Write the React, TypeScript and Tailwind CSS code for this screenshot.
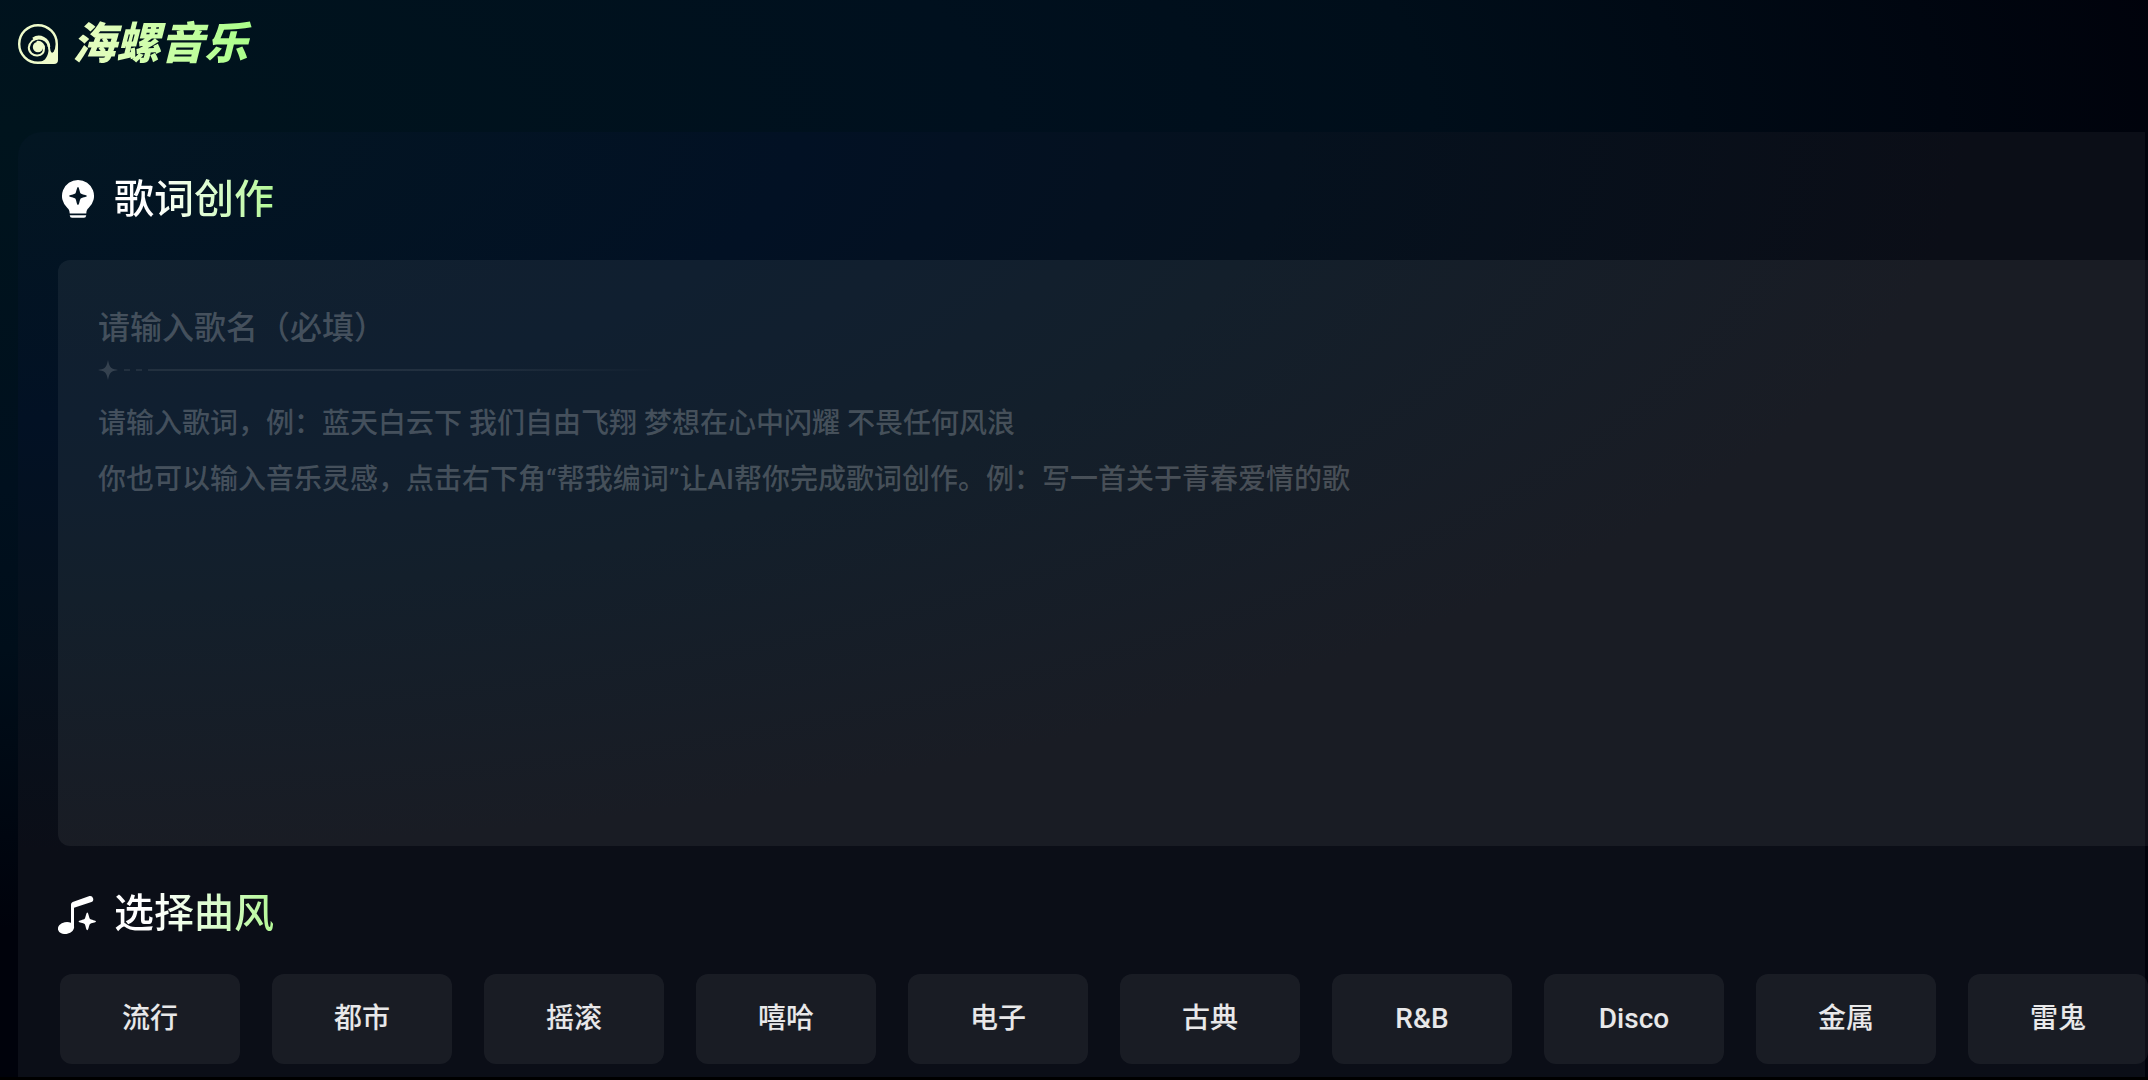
import React from "react";

const styles = ["流行", "都市", "摇滚", "嘻哈", "电子", "古典", "R&B", "Disco", "金属", "雷鬼"];

const lyricsHint =
  "请输入歌词，例：蓝天白云下 我们自由飞翔 梦想在心中闪耀 不畏任何风浪\n你也可以输入音乐灵感，点击右下角“帮我编词”让AI帮你完成歌词创作。例：写一首关于青春爱情的歌";

function Logo() {
  return (
    <svg viewBox="0 0 40 40" className="size-10 shrink-0" fill="none" aria-hidden="true">
      <circle cx="20" cy="20" r="18.800" stroke="#effccb" strokeWidth="2.400" />
      <path
        fill="#effccb"
        d="M20 40C26 37.500 29.500 33.500 30.300 28L31.500 25.500C32 29 35 29.500 36 27.500C37.500 24.500 38 23 38 20H40V36Q40 40 36 40Z"
      />
      <path
        d="M33 30C31 28 31.300 26 31 23A10.200 10.200 0 0 0 10.800 23.500C10.800 28.500 15 31.800 19.500 31.500C23.500 31.200 26 28.500 26 24.500A6.200 6.200 0 0 0 19.500 17.800"
        stroke="#effccb"
        strokeWidth="2"
        strokeLinecap="round"
      />
      <path d="M31 23A10.200 10.200 0 0 0 15 14.700" stroke="#effccb" strokeWidth="2.500" />
      <circle cx="20" cy="23" r="5.200" fill="#effccb" />
    </svg>
  );
}

function BulbIcon() {
  return (
    <svg viewBox="0 0 40 40" className="size-10 shrink-0" fill="#fff" aria-hidden="true">
      <path
        fillRule="evenodd"
        d="M20 0a16 16 0 0 1 10.600 28C29 29.500 28.500 30.500 28.300 33.500H11.700C11.500 30.500 11 29.500 9.400 28A16 16 0 0 1 20 0ZM20 7C18.900 7 18.300 12 17.500 13.300C16.300 14.600 11.200 14.900 11.200 16C11.200 17.100 16.300 17.400 17.500 18.700C18.300 20 18.900 25 20 25C21.100 25 21.700 20 22.500 18.700C23.700 17.400 28.800 17.100 28.800 16C28.800 14.900 23.700 14.600 22.500 13.300C21.700 12 21.100 7 20 7Z"
      />
      <path d="M11.700 35.200H28.300Q28 37.800 26 37.800H14Q12 37.800 11.700 35.200Z" />
    </svg>
  );
}

function NoteIcon() {
  return (
    <svg viewBox="0 0 40 40" className="size-10 shrink-0" fill="#fff" aria-hidden="true">
      <path d="M13 10.500Q13 8.700 14.700 8L31.500 2A3.200 3.200 0 0 1 33.500 8L16 13.700V34H13Z" />
      <ellipse cx="8" cy="34" rx="8.200" ry="5.900" transform="rotate(-12 8 34)" />
      <path d="M29.300 18.500C30.400 18.500 31 23.500 31.900 24.800C33.100 26.100 38 26.300 38 27.400C38 28.500 33.100 28.700 31.900 30C31 31.300 30.400 36.300 29.300 36.300C28.200 36.300 27.600 31.300 26.700 30C25.500 28.700 20.600 28.500 20.600 27.400C20.600 26.300 25.500 26.100 26.700 24.800C27.600 23.500 28.200 18.500 29.300 18.500Z" />
    </svg>
  );
}

function Divider() {
  return (
    <div className="flex items-center gap-1.5 opacity-15" aria-hidden="true">
      <svg viewBox="0 0 20 20" className="size-5" fill="#fff">
        <path d="M10 0C11 5 12 7 13.500 8C15 9 17 9.400 20 10C17 10.600 15 11 13.500 12C12 13 11 15 10 20C9 15 8 13 6.500 12C5 11 3 10.600 0 10C3 9.400 5 9 6.500 8C8 7 9 5 10 0Z" />
      </svg>
      <span className="h-0.5 w-1.5 bg-white/50" />
      <span className="h-0.5 w-1.5 bg-white/50" />
      <span className="h-0.5 w-[520px] bg-linear-to-r from-white/50 from-60% to-transparent" />
    </div>
  );
}

function Heading({ icon, children }: { icon: React.ReactNode; children: string }) {
  return (
    <h2 className="flex items-center gap-4 text-[40px] leading-[56px] font-medium">
      {icon}
      <span className="bg-linear-to-r from-white from-25% to-[#b4f896] bg-clip-text text-transparent">{children}</span>
    </h2>
  );
}

export default function App() {
  return (
    <div className="min-h-screen overflow-hidden bg-black bg-[radial-gradient(ellipse_2200px_800px_at_0%_12%,#00141d_0%,#00101e_45%,#000e1a_65%,#00020b_100%)] font-['Roboto','Noto_Sans_CJK_SC',sans-serif] pr-[3px]">
      <header className="flex items-center gap-3.5 pt-4 pb-[60px] pl-[18px]">
        <Logo />
        <h1 className="bg-linear-to-r from-[#eafcc4] to-[#a8ff88] bg-clip-text pr-2 text-[44px] leading-[56px] font-black text-transparent italic">
          海螺音乐
        </h1>
      </header>
      <main className="ml-[18px] rounded-tl-3xl bg-[#0b0e17] bg-[radial-gradient(ellipse_1950px_720px_at_0%_0%,#031622_0%,#021124_40%,#05111e_65%,#0b0e17_100%)] pt-10 pb-[13px] pl-10">
        <Heading icon={<BulbIcon />}>歌词创作</Heading>
        <section className="mt-8 mr-[-3px] flex h-[586px] flex-col rounded-l-xl bg-white/6 pt-11 pl-10">
          <input
            aria-label="歌名"
            placeholder="请输入歌名（必填）"
            className="h-12 text-[32px] font-medium text-white outline-none placeholder:text-white/22"
          />
          <div className="mt-2">
            <Divider />
          </div>
          <textarea
            aria-label="歌词"
            placeholder={lyricsHint}
            className="mt-4 grow resize-none text-[28px] leading-[56px] font-medium text-white outline-none placeholder:text-white/22"
          />
        </section>
        <div className="mt-10">
          <Heading icon={<NoteIcon />}>选择曲风</Heading>
        </div>
        <div className="mt-8 mr-[-3px] flex gap-8 pl-0.5">
          {styles.map((s) => (
            <button
              key={s}
              type="button"
              className="h-[90px] w-[180px] shrink-0 rounded-xl bg-white/6 text-[28px] font-medium text-white/90"
            >
              {s}
            </button>
          ))}
        </div>
      </main>
      <div className="mr-[-3px] h-[3px] bg-black" />
    </div>
  );
}
